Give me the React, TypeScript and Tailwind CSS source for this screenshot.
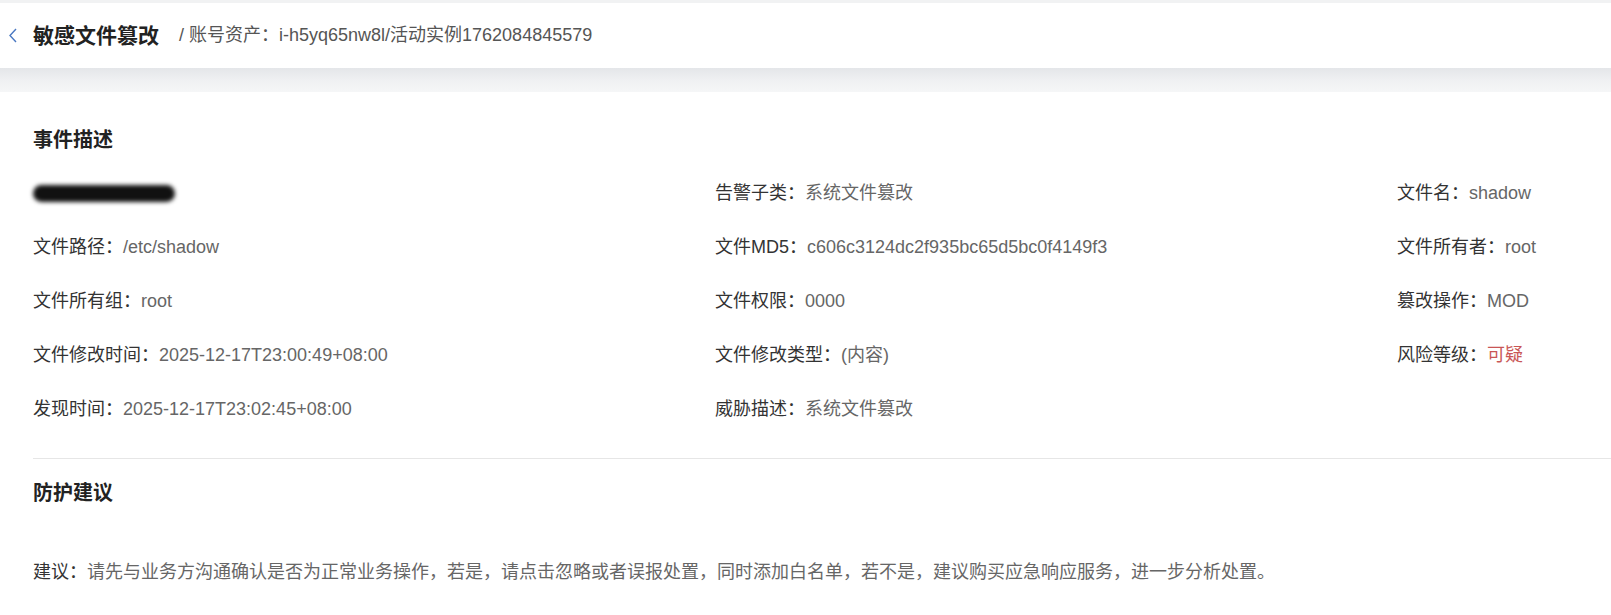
import React from "react";

const font = "font-['Liberation_Sans','Noto_Sans_CJK_SC',sans-serif]";

type Field = { label: string; value?: string; tone?: "risk"; redacted?: boolean };

const fields: Field[] = [
  { label: "", redacted: true },
  { label: "告警子类", value: "系统文件篡改" },
  { label: "文件名", value: "shadow" },
  { label: "文件路径", value: "/etc/shadow" },
  { label: "文件MD5", value: "c606c3124dc2f935bc65d5bc0f4149f3" },
  { label: "文件所有者", value: "root" },
  { label: "文件所有组", value: "root" },
  { label: "文件权限", value: "0000" },
  { label: "篡改操作", value: "MOD" },
  { label: "文件修改时间", value: "2025-12-17T23:00:49+08:00" },
  { label: "文件修改类型", value: "(内容)" },
  { label: "风险等级", value: "可疑", tone: "risk" },
  { label: "发现时间", value: "2025-12-17T23:02:45+08:00" },
  { label: "威胁描述", value: "系统文件篡改" },
];

function FieldCell({ f }: { f: Field }) {
  if (f.redacted) {
    // blacked-out text in the source screenshot
    return (
      <div className="flex h-[54px] items-center">
        <div className="h-[17px] w-[142px] rounded-full bg-[#111] blur-[2px]" />
      </div>
    );
  }
  return (
    <div className="flex h-[54px] items-center whitespace-nowrap text-[18px]">
      <span className="text-[#333]">{f.label}：</span>
      <span className={f.tone === "risk" ? "text-[#c95656]" : "text-[#666]"}>
        {f.value}
      </span>
    </div>
  );
}

export default function App() {
  return (
    <div className={`min-h-screen bg-white ${font}`}>
      <div className="h-[3px] bg-[#f1f2f3]" />
      <header className="flex h-[65px] items-center bg-white pl-[8px]">
        <svg width="10" height="15" viewBox="0 0 10 15" className="mr-[15px]">
          <path d="M8 1 L2 7.5 L8 14" fill="none" stroke="#4a78c2" strokeWidth="1.4" />
        </svg>
        <h1 className="text-[21px] font-bold text-[#222]">敏感文件篡改</h1>
        <span className="ml-[20px] text-[18px] text-[#555]">
          / 账号资产：i-h5yq65nw8l/活动实例1762084845579
        </span>
      </header>
      <div className="h-[24px] bg-gradient-to-b from-[#e4e6e9] via-[#eff0f2] to-[#f5f6f7]" />

      <main className="pl-[33px] pt-[34px]">
        <h2 className="h-[28px] text-[20px] font-bold leading-[28px] text-[#222]">事件描述</h2>
        <div className="mt-[12px] grid grid-cols-[682px_682px_1fr]">
          {fields.map((f, i) => (
            <FieldCell key={i} f={f} />
          ))}
        </div>

        <div className="mt-[22px] h-px bg-[#e6e6e6]" />

        <h2 className="mt-[20px] h-[28px] text-[20px] font-bold leading-[28px] text-[#222]">防护建议</h2>
        <p className="mt-[51px] text-[18px] leading-[28px]">
          <span className="text-[#333]">建议：</span>
          <span className="text-[#666]">
            请先与业务方沟通确认是否为正常业务操作，若是，请点击忽略或者误报处置，同时添加白名单，若不是，建议购买应急响应服务，进一步分析处置。
          </span>
        </p>
      </main>
    </div>
  );
}
